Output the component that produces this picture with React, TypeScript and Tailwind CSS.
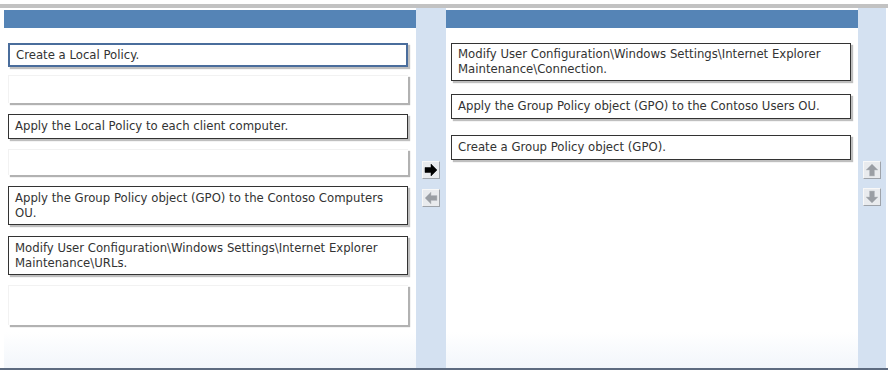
import React from "react";

type Slot = { text?: string; h: string; mt: string; selected?: boolean };

const leftSlots: Slot[] = [
  { text: "Create a Local Policy.", h: "h-[24px]", mt: "mt-[15px]", selected: true },
  { h: "h-[28px]", mt: "mt-[8px]" },
  { text: "Apply the Local Policy to each client computer.", h: "h-[25px]", mt: "mt-[11px]" },
  { h: "h-[26px]", mt: "mt-[10px]" },
  {
    text: "Apply the Group Policy object (GPO) to the Contoso Computers OU.",
    h: "h-[39px]",
    mt: "mt-[11px]",
  },
  {
    text: "Modify User Configuration\\Windows Settings\\Internet Explorer Maintenance\\URLs.",
    h: "h-[39px]",
    mt: "mt-[11px]",
  },
  { h: "h-[40px]", mt: "mt-[10px]" },
];

const rightSlots: Slot[] = [
  {
    text: "Modify User Configuration\\Windows Settings\\Internet Explorer Maintenance\\Connection.",
    h: "h-[38px]",
    mt: "mt-[15px]",
  },
  {
    text: "Apply the Group Policy object (GPO) to the Contoso Users OU.",
    h: "h-[25px]",
    mt: "mt-[13px]",
  },
  { text: "Create a Group Policy object (GPO).", h: "h-[25px]", mt: "mt-[16px]" },
];

const SlotBox: React.FC<{ slot: Slot }> = ({ slot }) => {
  if (!slot.text) {
    return (
      <div
        className={`${slot.h} ${slot.mt} w-[400px] bg-white border-t border-l border-[#f2f2f2] shadow-[2px_2px_1px_rgba(0,0,0,0.3)]`}
      />
    );
  }
  return (
    <div
      className={`${slot.h} ${slot.mt} w-[400px] bg-white flex items-center px-[6px] text-[11.7px] leading-[15px] text-[#333] shadow-[2px_2px_1px_rgba(0,0,0,0.25)] ${
        slot.selected ? "border-2 border-[#4a6d9c]" : "border border-[#333]"
      }`}
    >
      <span>{slot.text}</span>
    </div>
  );
};

const ArrowButton: React.FC<{ dir: "right" | "left" | "up" | "down"; active?: boolean }> = ({
  dir,
  active,
}) => {
  const rot = { right: 0, left: 180, up: 270, down: 90 }[dir];
  return (
    <div className="w-[18px] h-[18px] bg-[#e9ebee] border border-t-[#f8f8f8] border-l-[#f8f8f8] border-r-[#9ea3aa] border-b-[#9ea3aa] flex items-center justify-center">
      <svg width="14" height="14" viewBox="0 0 14 14" style={{ transform: `rotate(${rot}deg)` }}>
        <polygon
          points="1,4.5 7,4.5 7,1 13,7 7,13 7,9.5 1,9.5"
          fill={active ? "#000" : "#9a9ea4"}
          stroke={active ? "#000" : "#b8bcc2"}
          strokeWidth="0.5"
        />
      </svg>
    </div>
  );
};

const App: React.FC = () => {
  return (
    <div className="w-[894px] h-[376px] bg-white pt-[4px] font-['DejaVu_Sans',Verdana,sans-serif]">
      <div className="w-[888px] h-[4px] bg-[#c2c2c2]" />
      <div className="w-[888px] h-[360px] flex border-b-2 border-[#5d6b80] box-content">
        <div className="ml-[4px] w-[412px] pt-[2px] flex flex-col bg-gradient-to-b from-white from-90% to-[#f2f6fb]">
          <div className="h-[18px] bg-[#5584b6]" />
          <div className="pl-[4px] flex flex-col">
            {leftSlots.map((s, i) => (
              <SlotBox key={i} slot={s} />
            ))}
          </div>
        </div>
        <div className="w-[30px] bg-[#d4e1f1] flex flex-col items-center pt-[153px] gap-[10px]">
          <ArrowButton dir="right" active />
          <ArrowButton dir="left" />
        </div>
        <div className="w-[412px] pt-[2px] flex flex-col bg-gradient-to-b from-white from-90% to-[#f2f6fb]">
          <div className="h-[18px] bg-[#5584b6]" />
          <div className="pl-[5px] flex flex-col">
            {rightSlots.map((s, i) => (
              <SlotBox key={i} slot={s} />
            ))}
          </div>
        </div>
        <div className="w-[28px] bg-[#d4e1f1] flex flex-col items-center pt-[153px] gap-[9px]">
          <ArrowButton dir="up" />
          <ArrowButton dir="down" />
        </div>
      </div>
    </div>
  );
};

export default App;
